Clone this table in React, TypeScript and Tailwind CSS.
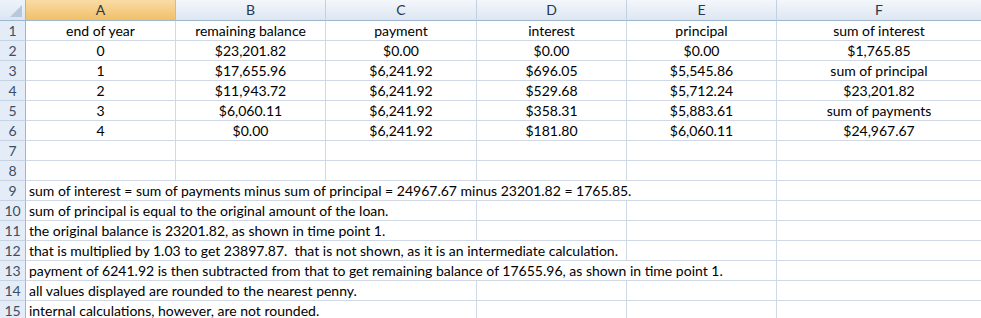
import React from 'react'

const cols = ['A', 'B', 'C', 'D', 'E', 'F']

const tableRows: string[][] = [
  ['end of year', 'remaining balance', 'payment', 'interest', 'principal', 'sum of interest'],
  ['0', '$23,201.82', '$0.00', '$0.00', '$0.00', '$1,765.85'],
  ['1', '$17,655.96', '$6,241.92', '$696.05', '$5,545.86', 'sum of principal'],
  ['2', '$11,943.72', '$6,241.92', '$529.68', '$5,712.24', '$23,201.82'],
  ['3', '$6,060.11', '$6,241.92', '$358.31', '$5,883.61', 'sum of payments'],
  ['4', '$0.00', '$6,241.92', '$181.80', '$6,060.11', '$24,967.67'],
  ['', '', '', '', '', ''],
  ['', '', '', '', '', ''],
]

// note rows: text lives in A and overflows across `span` columns
const notes: { text: string; span: number }[] = [
  { text: 'sum of interest = sum of payments minus sum of principal = 24967.67 minus 23201.82 = 1765.85.', span: 5 },
  { text: 'sum of principal is equal to the original amount of the loan.', span: 3 },
  { text: 'the original balance is 23201.82, as shown in time point 1.', span: 3 },
  { text: 'that is multiplied by 1.03 to get 23897.87.  that is not shown, as it is an intermediate calculation.', span: 4 },
  { text: 'payment of 6241.92 is then subtracted from that to get remaining balance of 17655.96, as shown in time point 1.', span: 5 },
  { text: 'all values displayed are rounded to the nearest penny.', span: 3 },
  { text: 'internal calculations, however, are not rounded.', span: 3 },
]

const spanClass: Record<number, string> = {
  3: 'col-span-3',
  4: 'col-span-4',
  5: 'col-span-5',
}

function RowHeader({ n }: { n: number }) {
  return (
    <div className="h-5 flex items-center justify-center bg-[#e4ecf7] border-r border-b border-r-[#9eb6ce] border-b-[#c5d3e3] text-[#3c4e63]">
      {n}
    </div>
  )
}

function Cell({ children, last }: { children?: React.ReactNode; last?: boolean }) {
  return (
    <div
      className={
        'h-5 flex items-center justify-center whitespace-nowrap border-b border-[#d0d7e5] ' +
        (last ? '' : 'border-r')
      }
    >
      {children}
    </div>
  )
}

export default function App() {
  return (
    <div
      className="w-[981px] h-[318px] overflow-hidden bg-white text-black text-[14px] leading-none"
      style={{ fontFamily: 'Lato, "Open Sans", sans-serif' }}
    >
      <div className="grid grid-cols-[26px_150px_150px_151px_150px_150px_1fr]">
        {/* column header row */}
        <div className="h-[21px] relative bg-gradient-to-b from-[#eef3fa] to-[#dbe5f2] border-r border-b border-[#9eb6ce]">
          <svg className="absolute right-[3px] bottom-[3px]" width="12" height="12" viewBox="0 0 12 12">
            <polygon points="12,0 12,12 0,12" fill="#b6c8de" />
          </svg>
        </div>
        {cols.map((c, i) => (
          <div
            key={c}
            className={
              'h-[21px] flex items-center justify-center border-b border-[#9eb6ce] text-[#27384d] ' +
              (i < cols.length - 1 ? 'border-r ' : '') +
              (c === 'A'
                ? 'bg-gradient-to-b from-[#f9dcA5] to-[#f1c066] border-r-[#f2b84f]'
                : 'bg-gradient-to-b from-[#f4f7fb] to-[#dde6f2] border-r-[#c2d0e0]')
            }
          >
            {c}
          </div>
        ))}

        {tableRows.map((row, r) => (
          <React.Fragment key={'r' + r}>
            <RowHeader n={r + 1} />
            {row.map((v, i) => (
              <Cell key={i} last={i === row.length - 1}>
                {v}
              </Cell>
            ))}
          </React.Fragment>
        ))}

        {notes.map((note, r) => (
          <React.Fragment key={'n' + r}>
            <RowHeader n={r + 9} />
            <div className={'h-5 flex items-center pl-[3px] whitespace-pre border-b border-r border-[#d0d7e5] ' + spanClass[note.span]}>
              {note.text}
            </div>
            {Array.from({ length: 6 - note.span }).map((_, i) => (
              <Cell key={i} last={i === 5 - note.span} />
            ))}
          </React.Fragment>
        ))}
      </div>
    </div>
  )
}
